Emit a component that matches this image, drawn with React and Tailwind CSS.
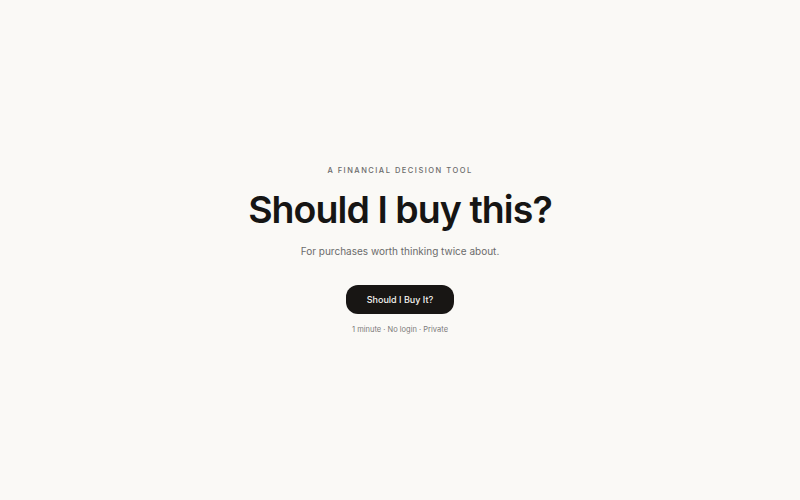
export default function App() {
  return (
    <div
      className="w-full h-[500px] bg-[#faf9f6] flex flex-col items-center justify-center"
      style={{ fontFamily: 'Inter, "Noto Sans", sans-serif' }}
    >
      <div className="flex flex-col items-center">
        <p className="text-[7.5px] tracking-[0.2em] text-[#6b6b6b] font-medium uppercase leading-none">
          A Financial Decision Tool
        </p>
        <h1 className="mt-[17px] text-[37.5px] leading-none font-semibold tracking-[-0.025em] text-[#161514]">
          Should I buy this?
        </h1>
        <p className="mt-[17px] text-[10px] text-[#6b6b6b] leading-none">
          For purchases worth thinking twice about.
        </p>
        <button className="mt-[29px] w-[108px] h-[29px] rounded-[12px] bg-[#181614] text-[#f5f4f0] text-[9px] font-medium">
          Should I Buy It?
        </button>
        <p className="mt-[12px] text-[7.5px] text-[#7a7a7a] leading-none">
          1 minute · No login · Private
        </p>
      </div>
    </div>
  );
}
